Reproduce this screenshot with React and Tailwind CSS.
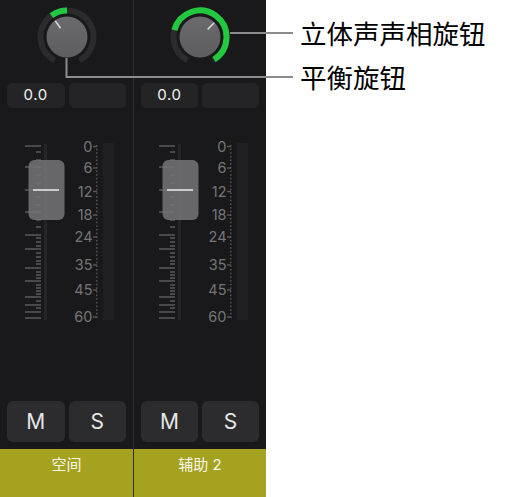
import React from "react";

// knob geometry helpers (angles in degrees, 0 = straight up, clockwise)
const pt = (a, r) => {
    const t = (a * Math.PI) / 180;
    return [30 + r * Math.sin(t), 30 - r * Math.cos(t)];
};
const arc = (a1, a2, r) => {
    const [x1, y1] = pt(a1, r);
    const [x2, y2] = pt(a2, r);
    return `M${x1} ${y1} A${r} ${r} 0 ${a2 - a1 > 180 ? 1 : 0} 1 ${x2} ${y2}`;
};

function Knob({ from, to, pointer }) {
    const [px1, py1] = pt(pointer, 11.5);
    const [px2, py2] = pt(pointer, 19.5);
    return (
        <svg width="60" height="60" viewBox="0 0 60 60" className="mx-auto">
            <defs>
                <linearGradient id="knobBody" x1="0" y1="0" x2="0" y2="1">
                    <stop offset="0" stopColor="#6b6b6d" />
                    <stop offset="1" stopColor="#5d5d5f" />
                </linearGradient>
            </defs>
            <path d={arc(-152, 152, 26.5)} stroke="#2b2b2d" strokeWidth="6" fill="none" />
            <path d={arc(from, to, 26.5)} stroke="#22c83f" strokeWidth="6" fill="none" />
            <circle cx="30" cy="30" r="20.5" fill="url(#knobBody)" />
            <line x1={px1} y1={py1} x2={px2} y2={py2} stroke="#d4d4d4" strokeWidth="1.6" strokeLinecap="round" />
        </svg>
    );
}

const longTicks = [146, 167, 190, 212, 235, 249, 268, 281, 297, 305, 312, 318];
const shortTicks = [152, 160, 175, 183, 197, 205, 220, 227, 238, 242, 246, 253, 257, 261, 264, 272, 275, 278, 285, 288, 291, 294, 301, 308];
const scale = [
    ["0", 146.5],
    ["6", 168],
    ["12", 191.5],
    ["18", 215],
    ["24", 237],
    ["35", 265],
    ["45", 290],
    ["60", 317],
];
const dots = Array.from({ length: 48 }, (_, i) => 145 + i * 3.65);

// fader, tick scale and level meter; y values below are offset from the strip top
function Fader() {
    const o = 108;
    return (
        <svg width="132" height="220" viewBox="0 0 132 220">
            <rect x="44" y={144 - o} width="3" height="176" fill="#252527" />
            {longTicks.map((y) => (
                <rect key={`l${y}`} x="25" y={y - o - 0.75} width="16" height="1.5" fill="#59595b" />
            ))}
            {shortTicks.map((y) => (
                <rect key={`s${y}`} x="36" y={y - o - 0.75} width="5" height="1.5" fill="#59595b" />
            ))}
            <rect x="28.5" y={160 - o} width="36" height="60" rx="6" fill="#757577" fillOpacity="0.86" />
            <rect x="33" y={190 - o - 0.8} width="26" height="1.6" fill="#e4e4e4" />

            <rect x="103" y={143 - o} width="11" height="177" fill="#202022" />
            {dots.map((y) => (
                <rect key={y} x="96" y={y - o} width="1.5" height="1.5" fill="#555557" />
            ))}
            {scale.map(([label, y]) => (
                <g key={label}>
                    <rect x="93" y={y - o - 0.7} width="4" height="1.4" fill="#5a5a5c" />
                    <text
                        x="92.5"
                        y={y - o + 5.2}
                        textAnchor="end"
                        fontSize="14.5"
                        fill="#757577"
                        style={{ fontFamily: "Inter, 'Liberation Sans', sans-serif" }}
                    >
                        {label}
                    </text>
                </g>
            ))}
        </svg>
    );
}

function Channel({ name, knob, className }) {
    return (
        <div className={`flex flex-col h-full ${className}`}>
            <div className="h-[83px] pt-[7px]">
                <Knob {...knob} />
            </div>
            <div className="flex gap-[4px] px-[7px] h-[25px]">
                <div className="flex-1 rounded-[5px] bg-[#242426] flex items-center justify-center text-[15px] tracking-[0.6px] text-[#f2f2f2] font-['Inter',sans-serif]">
                    0.0
                </div>
                <div className="flex-1 rounded-[5px] bg-[#242426]" />
            </div>
            <Fader />
            <div className="flex-1" />
            <div className="flex gap-[4px] px-[7px] pb-[7px]">
                <button className="flex-1 h-[41px] rounded-[6px] bg-[#2c2c2e] text-[21px] text-[#e6e6e6] font-['Inter',sans-serif]">
                    M
                </button>
                <button className="flex-1 h-[41px] rounded-[6px] bg-[#2c2c2e] text-[21px] text-[#e6e6e6] font-['Inter',sans-serif]">
                    S
                </button>
            </div>
            <div className="h-[48px] bg-[#a4a21e] pt-[6px] text-center text-[15px] leading-[20px] text-[#f6f6ea] font-['Inter','Noto_Sans_CJK_SC',sans-serif]">
                {name}
            </div>
        </div>
    );
}

export default function App() {
    return (
        <div className="relative flex w-[516px] h-[497px] bg-white">
            <div className="flex w-[266px] h-full bg-[#19191b]">
                <Channel
                    name="空间"
                    knob={{ from: -36, to: 0, pointer: -36 }}
                    className="w-[134px] border-r border-[#2e2e30]"
                />
                <Channel
                    name="辅助 2"
                    knob={{ from: -75, to: 148, pointer: 45 }}
                    className="w-[132px]"
                />
            </div>

            <div className="pl-[34px] pt-[11px] text-[26.5px] leading-[44px] text-black font-['Noto_Sans_CJK_SC',sans-serif]">
                <p>立体声声相旋钮</p>
                <p>平衡旋钮</p>
            </div>

            {/* callout leader lines */}
            <svg className="absolute inset-0 pointer-events-none" width="516" height="497">
                <line x1="230" y1="33" x2="293" y2="33" stroke="#8c8c8c" strokeWidth="2" />
                <polyline points="66.5,58 66.5,77 293,77" stroke="#8c8c8c" strokeWidth="2" fill="none" />
            </svg>
        </div>
    );
}
